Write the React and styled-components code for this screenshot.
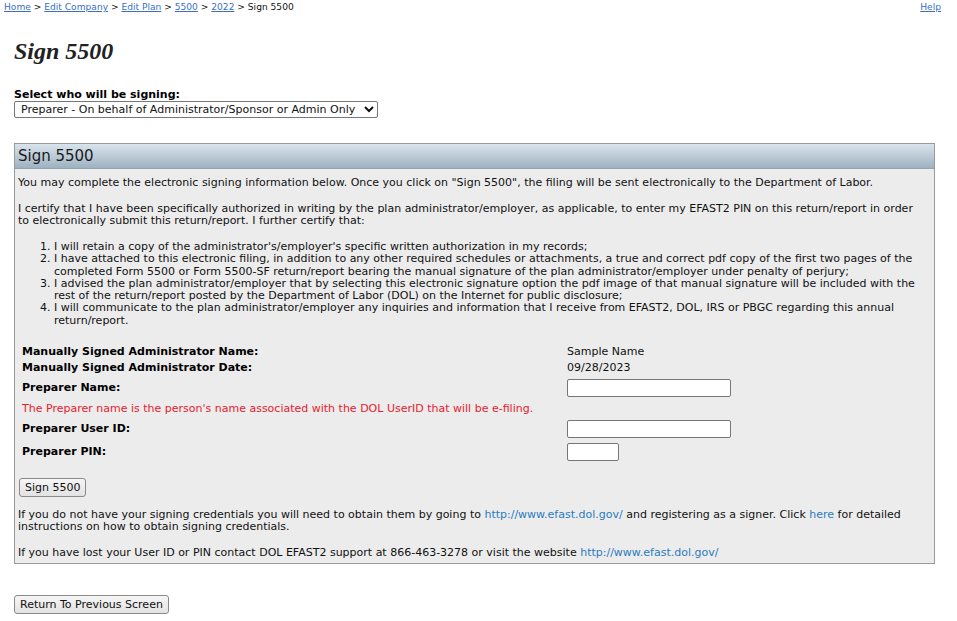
import React from 'react';
import styled, { createGlobalStyle } from 'styled-components';

const GlobalStyle = createGlobalStyle`
  body {
    margin: 0;
    background: #fff;
    font-family: "DejaVu Sans", Verdana, sans-serif;
    font-size: 11px;
    line-height: 12px;
    color: #111;
  }
`;

const Page = styled.div`
  width: 957px;
  padding: 0 0 6px 0;
`;

const TopBar = styled.div`
  display: flex;
  justify-content: space-between;
  align-items: flex-start;
  padding: 2px 16px 0 4px;
  font-size: 9.1px;
  line-height: 11px;
`;

const Crumbs = styled.div`
  color: #111;
`;

const NavLink = styled.a`
  color: #3a6fc4;
  text-decoration: underline;
  cursor: pointer;
`;

const Content = styled.div`
  padding: 0 22px 0 14px;
`;

const Title = styled.h1`
  margin: 25px 0 0 0;
  font-family: "Liberation Serif", "Times New Roman", serif;
  font-style: italic;
  font-weight: bold;
  font-size: 24px;
  line-height: 26px;
  color: #222;
`;

const SignerBlock = styled.div`
  margin-top: 25px;
  display: flex;
  flex-direction: column;
  align-items: flex-start;
`;

const FieldLabel = styled.label`
  font-weight: bold;
  font-size: 11px;
  line-height: 12px;
  color: #000;
`;

const Select = styled.select`
  height: 17px;
  width: 364px;
  padding: 0 0 0 2px;
  font-family: "DejaVu Sans", Verdana, sans-serif;
  font-size: 11px;
  border: 1px solid #777;
  border-radius: 2px;
  background: #fff;
  color: #111;
`;

const Panel = styled.section`
  margin-top: 25px;
  border: 1px solid #9a9a9a;
  background: #ececec;
`;

const PanelHeader = styled.div`
  height: 24px;
  padding: 0 0 0 3px;
  display: flex;
  align-items: center;
  font-size: 15px;
  color: #1a1a1a;
  background: linear-gradient(to bottom, #d9e4ec 0%, #bccbd7 50%, #9db1c0 100%);
  border-bottom: 1px solid #93a5b3;
`;

const PanelBody = styled.div`
  padding: 8px 8px 4px 3px;
`;

const Para = styled.p`
  margin: 0 0 14px 0;
  &:last-child {
    margin-bottom: 0;
  }
`;

const Clauses = styled.ol`
  margin: 0 0 17px 0;
  padding-left: 36px;
  line-height: 12.3px;
`;

const FieldTable = styled.div`
  display: grid;
  grid-template-columns: 545px 1fr;
  padding-left: 4px;
  align-items: center;
`;

const RowLabel = styled.div`
  font-weight: bold;
  color: #000;
  min-height: ${p => p.$h || 16}px;
  display: flex;
  align-items: center;
`;

const RowValue = styled.div`
  min-height: ${p => p.$h || 16}px;
  display: flex;
  align-items: center;
`;

const Hint = styled.div`
  grid-column: 1 / 3;
  color: #e8202e;
  min-height: 18px;
  display: flex;
  align-items: center;
`;

const TextInput = styled.input`
  box-sizing: border-box;
  width: ${p => p.$w}px;
  height: 18px;
  border: 1px solid #767676;
  border-radius: 2px;
  background: #fff;
  padding: 0 2px;
  margin: 0;
`;

const Button = styled.button`
  font-family: "DejaVu Sans", Verdana, sans-serif;
  font-size: 11px;
  color: #111;
  height: 19px;
  padding: 0 5px;
  border: 1px solid #8a8a8a;
  border-radius: 3px;
  background: linear-gradient(to bottom, #f6f6f6, #e2e2e2);
  cursor: pointer;
`;

const SignRow = styled.div`
  margin: 14px 0 12px 1px;
`;

const InfoLink = styled.a`
  color: #2a7bc0;
  text-decoration: none;
  cursor: pointer;
`;

const Footer = styled.div`
  margin-top: 31px;
`;

export default function App() {
  return (
    <Page>
      <GlobalStyle />
      <TopBar>
        <Crumbs>
          <NavLink>Home</NavLink> &gt; <NavLink>Edit Company</NavLink> &gt; <NavLink>Edit Plan</NavLink> &gt;{' '}
          <NavLink>5500</NavLink> &gt; <NavLink>2022</NavLink> &gt; Sign 5500
        </Crumbs>
        <NavLink>Help</NavLink>
      </TopBar>
      <Content>
        <Title>Sign 5500</Title>
        <SignerBlock>
          <FieldLabel htmlFor="signer">Select who will be signing:</FieldLabel>
          <Select id="signer" defaultValue="preparer">
            <option value="preparer">Preparer - On behalf of Administrator/Sponsor or Admin Only</option>
          </Select>
        </SignerBlock>
        <Panel>
          <PanelHeader>Sign 5500</PanelHeader>
          <PanelBody>
            <Para>
              You may complete the electronic signing information below. Once you click on "Sign 5500", the filing will be sent electronically to the Department of Labor.
            </Para>
            <Para>
              I certify that I have been specifically authorized in writing by the plan administrator/employer, as applicable, to enter my EFAST2 PIN on this return/report in order to electronically submit this return/report. I further certify that:
            </Para>
            <Clauses>
              <li>I will retain a copy of the administrator's/employer's specific written authorization in my records;</li>
              <li>I have attached to this electronic filing, in addition to any other required schedules or attachments, a true and correct pdf copy of the first two pages of the completed Form 5500 or Form 5500-SF return/report bearing the manual signature of the plan administrator/employer under penalty of perjury;</li>
              <li>I advised the plan administrator/employer that by selecting this electronic signature option the pdf image of that manual signature will be included with the rest of the return/report posted by the Department of Labor (DOL) on the Internet for public disclosure;</li>
              <li>I will communicate to the plan administrator/employer any inquiries and information that I receive from EFAST2, DOL, IRS or PBGC regarding this annual return/report.</li>
            </Clauses>
            <FieldTable>
              <RowLabel>Manually Signed Administrator Name:</RowLabel>
              <RowValue>Sample Name</RowValue>
              <RowLabel>Manually Signed Administrator Date:</RowLabel>
              <RowValue>09/28/2023</RowValue>
              <RowLabel $h={24}>Preparer Name:</RowLabel>
              <RowValue $h={24}><TextInput $w={164} /></RowValue>
              <Hint>The Preparer name is the person's name associated with the DOL UserID that will be e-filing.</Hint>
              <RowLabel $h={22}>Preparer User ID:</RowLabel>
              <RowValue $h={22}><TextInput $w={164} /></RowValue>
              <RowLabel $h={24}>Preparer PIN:</RowLabel>
              <RowValue $h={24}><TextInput $w={52} /></RowValue>
            </FieldTable>
            <SignRow>
              <Button>Sign 5500</Button>
            </SignRow>
            <Para>
              If you do not have your signing credentials you will need to obtain them by going to <InfoLink>http://www.efast.dol.gov/</InfoLink> and registering as a signer. Click <InfoLink>here</InfoLink> for detailed instructions on how to obtain signing credentials.
            </Para>
            <Para>
              If you have lost your User ID or PIN contact DOL EFAST2 support at 866-463-3278 or visit the website <InfoLink>http://www.efast.dol.gov/</InfoLink>
            </Para>
          </PanelBody>
        </Panel>
        <Footer>
          <Button>Return To Previous Screen</Button>
        </Footer>
      </Content>
    </Page>
  );
}
